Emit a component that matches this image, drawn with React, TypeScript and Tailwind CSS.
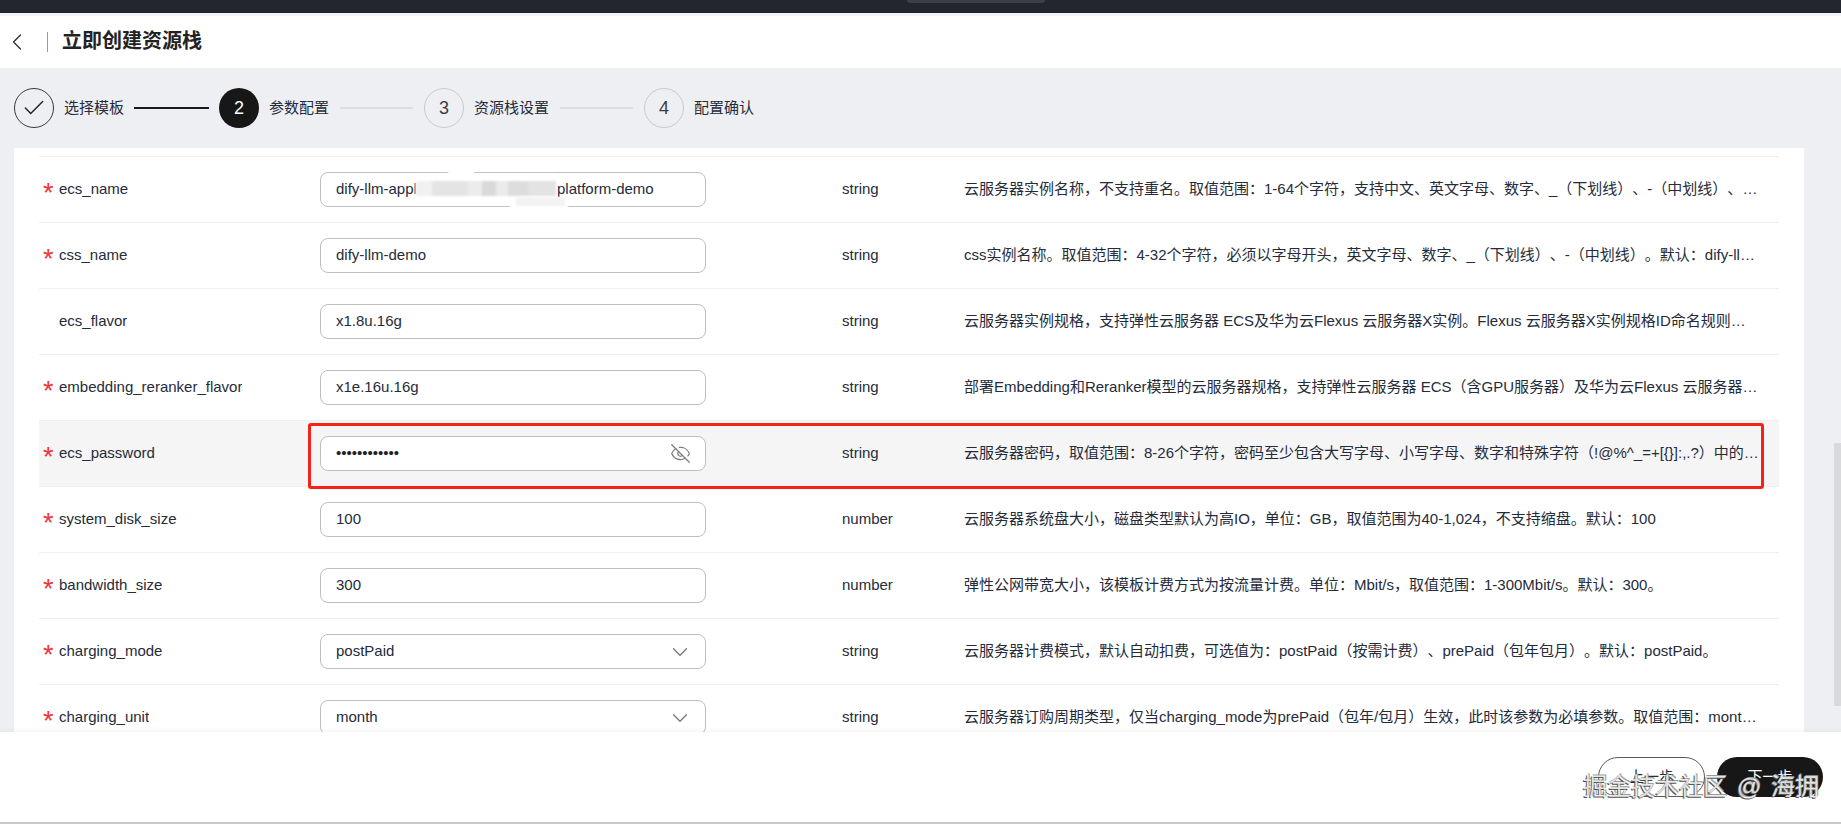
import { Check, ChevronDown, ChevronLeft, EyeOff } from 'lucide-react'

type Row = {
  name: string
  required: boolean
  value: string
  type: string
  desc: string
  kind?: 'password' | 'select'
}

const rows: Row[] = [
  { name: 'ecs_name', required: true, value: 'dify-llm-appl', type: 'string', desc: '云服务器实例名称，不支持重名。取值范围：1-64个字符，支持中文、英文字母、数字、_（下划线）、-（中划线）、.（点），默认：dify-llm' },
  { name: 'css_name', required: true, value: 'dify-llm-demo', type: 'string', desc: 'css实例名称。取值范围：4-32个字符，必须以字母开头，英文字母、数字、_（下划线）、-（中划线）。默认：dify-llm-demo' },
  { name: 'ecs_flavor', required: false, value: 'x1.8u.16g', type: 'string', desc: '云服务器实例规格，支持弹性云服务器 ECS及华为云Flexus 云服务器X实例。Flexus 云服务器X实例规格ID命名规则为x1.?u.?g' },
  { name: 'embedding_reranker_flavor', required: true, value: 'x1e.16u.16g', type: 'string', desc: '部署Embedding和Reranker模型的云服务器规格，支持弹性云服务器 ECS（含GPU服务器）及华为云Flexus 云服务器X实例' },
  { name: 'ecs_password', required: true, value: '••••••••••••', type: 'string', kind: 'password', desc: '云服务器密码，取值范围：8-26个字符，密码至少包含大写字母、小写字母、数字和特殊字符（!@%^_=+[{}]:,.?）中的三种' },
  { name: 'system_disk_size', required: true, value: '100', type: 'number', desc: '云服务器系统盘大小，磁盘类型默认为高IO，单位：GB，取值范围为40-1,024，不支持缩盘。默认：100' },
  { name: 'bandwidth_size', required: true, value: '300', type: 'number', desc: '弹性公网带宽大小，该模板计费方式为按流量计费。单位：Mbit/s，取值范围：1-300Mbit/s。默认：300。' },
  { name: 'charging_mode', required: true, value: 'postPaid', type: 'string', kind: 'select', desc: '云服务器计费模式，默认自动扣费，可选值为：postPaid（按需计费）、prePaid（包年包月）。默认：postPaid。' },
  { name: 'charging_unit', required: true, value: 'month', type: 'string', kind: 'select', desc: '云服务器订购周期类型，仅当charging_mode为prePaid（包年/包月）生效，此时该参数为必填参数。取值范围：month（包月）' },
]

const steps = [
  { label: '选择模板', state: 'done' },
  { label: '参数配置', state: 'current' },
  { label: '资源栈设置', state: 'todo' },
  { label: '配置确认', state: 'todo' },
]

// the smudge somebody painted over the instance name
const smudge = [
  'w-[16px] bg-[#f1f1f1]',
  'w-[36px] bg-[#e4e4e4]',
  'w-[14px] bg-[#ececec]',
  'w-[14px] bg-[#d9d9d9]',
  'w-[12px] bg-[#ebebeb]',
  'w-[20px] bg-[#dddddd]',
  'w-[28px] bg-[#e3e3e3]',
]

function Stepper() {
  return (
    <div className="h-[80px] shrink-0 flex items-center pl-[14px]">
      {steps.map((s, i) => (
        <div key={s.label} className="flex items-center">
          <div
            className={
              s.state === 'current'
                ? 'w-[40px] h-[40px] rounded-full bg-[#171717] text-white flex items-center justify-center text-[18px]'
                : s.state === 'done'
                  ? 'w-[40px] h-[40px] rounded-full border border-[#3a3a3a] flex items-center justify-center'
                  : 'w-[40px] h-[40px] rounded-full border border-[#c9cacd] text-[#3c3c3c] flex items-center justify-center text-[18px]'
            }
          >
            {s.state === 'done' ? <Check size={26} strokeWidth={1.3} className="text-[#222]" /> : i + 1}
          </div>
          <span className="ml-[10px] whitespace-nowrap">{s.label}</span>
          {i < steps.length - 1 && (
            <div className={s.state === 'done' ? 'w-[75px] h-[2px] bg-[#1a1a1a] mx-[10px]' : 'w-[73px] h-[2px] bg-[#dcdde0] mx-[11px]'} />
          )}
        </div>
      ))}
    </div>
  )
}

function Field({ row }: { row: Row }) {
  return (
    <div
      className={
        row.kind === 'select'
          ? 'relative w-[386px] h-[35px] shrink-0 bg-white border border-[#bdbec2] rounded-[8px] flex items-center justify-between pl-[15px] pr-[12px]'
          : 'relative w-[386px] h-[35px] shrink-0 bg-white border border-[#bdbec2] rounded-[8px] flex items-center justify-between pl-[15px] pr-[14px]'
      }
    >
      <span className={row.kind === 'password' ? 'text-[#222]' : ''}>{row.value}</span>
      {row.name === 'ecs_name' && <span className="absolute left-[236px]">platform-demo</span>}
      {row.kind === 'password' && <EyeOff size={21} strokeWidth={1.4} className="text-[#7d7d7d]" />}
      {row.kind === 'select' && <ChevronDown size={26} strokeWidth={1.2} className="text-[#777]" />}
    </div>
  )
}

export default function App() {
  return (
    <div
      className="relative w-[1841px] h-[824px] overflow-hidden flex flex-col bg-[#eeeff3] text-[15px] text-[#252b3a] [text-spacing-trim:space-all]"
      style={{ fontFamily: '"Liberation Sans", "Noto Sans CJK SC", sans-serif' }}
    >
      {/* console top bar, mostly cut off */}
      <div className="relative h-[13px] shrink-0 bg-[#23262f]">
        <div className="absolute left-[907px] top-0 w-[138px] h-[3px] bg-[#3c3f49] rounded-b-[3px]" />
      </div>
      <div className="h-[3px] shrink-0 bg-[#f2f4f9]" />

      <header className="h-[52px] shrink-0 bg-white flex items-center">
        <ChevronLeft size={28} strokeWidth={1.2} className="ml-[3px] text-[#333]" />
        <div className="ml-[16px] w-px h-[20px] bg-[#9a9a9a]" />
        <h1 className="ml-[14px] pb-[2px] text-[20px] font-bold text-[#222]">立即创建资源栈</h1>
      </header>

      <Stepper />

      <main className="flex-1 min-h-0 overflow-hidden flex">
        <section className="relative ml-[14px] w-[1790px] bg-white pl-[25px] pr-[25px] pt-[8px]">
          <div className="border-t border-[#eeeff1]">
            {rows.map((row) => (
              <div
                key={row.name}
                className={
                  row.kind === 'password'
                    ? 'h-[66px] flex items-center border-b border-[#eeeff1] bg-[#f5f5f6]'
                    : 'h-[66px] flex items-center border-b border-[#eeeff1]'
                }
              >
                <div className="w-[281px] shrink-0 flex items-center pl-[4px]">
                  <span className="w-[16px] h-[19px] text-[#f0353a] text-[27px] leading-[27px] overflow-visible">{row.required ? '*' : ''}</span>
                  <span className="truncate">{row.name}</span>
                </div>
                <Field row={row} />
                <div className="w-[136px] shrink-0" />
                <div className="w-[122px] shrink-0">{row.type}</div>
                <div className={row.kind === 'password' ? 'w-[797px] shrink-0 truncate' : 'w-[794px] shrink-0 truncate'}>{row.desc}</div>
              </div>
            ))}
          </div>

          {/* smudge over ecs_name, lies across the input */}
          <div className="absolute left-[434px] top-[19px] w-[26px] h-[10px] bg-white blur-[1px]" />
          <div className="absolute left-[496px] top-[54px] w-[58px] h-[11px] bg-white blur-[1px]" />
          <div className="absolute left-[402px] top-[26px] w-[140px] h-[31px] bg-white blur-[1px]" />
          <div className="absolute left-[402px] top-[33px] h-[15px] flex blur-[1px]">
            {smudge.map((c) => (
              <div key={c} className={c} />
            ))}
          </div>
          <div className="absolute left-[502px] top-[49px] w-[49px] h-[9px] bg-[#f3f3f3] blur-[1px]" />

          {/* highlight drawn on top of the screenshot */}
          <div className="absolute left-[294px] top-[275px] w-[1456px] h-[66px] border-[3px] border-[#f3231a] rounded-[3px]" />
        </section>
        <div className="ml-[30px] w-[7px] h-[263px] mt-[295px] bg-[#d9d9dc] rounded-l-[2px]" />
      </main>

      <footer className="relative h-[90px] shrink-0 bg-white flex justify-end items-start pt-[25px] pr-[18px] gap-[12px] shadow-[0_-2px_4px_rgba(0,0,0,0.04)]">
        <button className="w-[107px] h-[40px] rounded-[20px] border border-[#5a5a5a]">上一步</button>
        <button className="w-[106px] h-[40px] rounded-[20px] bg-[#171717] text-white">下一步</button>
        <div className="absolute left-[1583px] top-[41px] text-[24px] leading-[28px] whitespace-nowrap [word-spacing:3px] text-white/80 [text-shadow:-1px_1px_0_#555,1px_-1px_0_#999]">
          掘金技术社区 @ 海拥
        </div>
      </footer>
      <div className="h-[2px] shrink-0 bg-[#c8c9c6]" />
    </div>
  )
}
